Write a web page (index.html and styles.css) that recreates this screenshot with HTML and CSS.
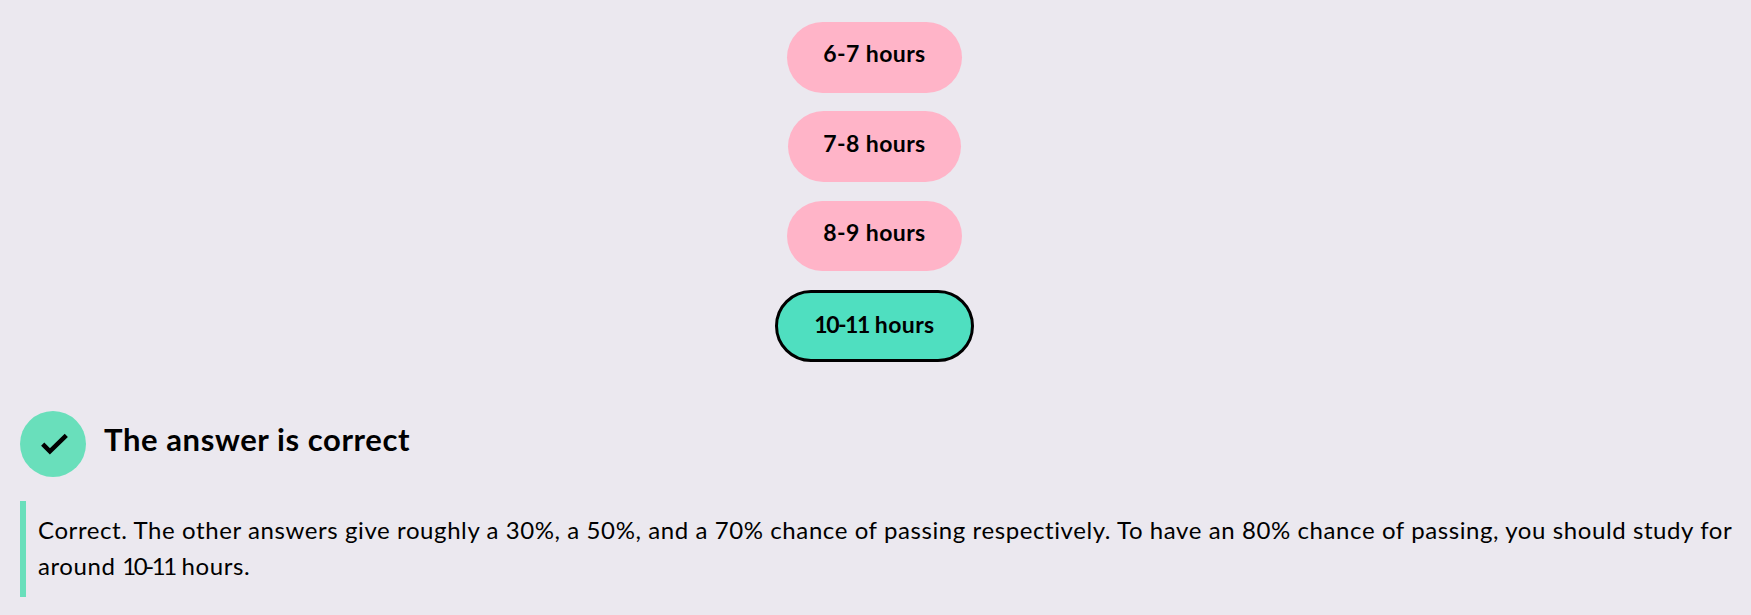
FILE: index.html
```html
<!DOCTYPE html>
<html lang="en">
<head>
<meta charset="utf-8">
<title>Quiz</title>
<link rel="stylesheet" href="styles.css">
</head>
<body>
<main class="quiz">
  <div class="options">
    <button class="option"><span class="option-label">6-7 hours</span></button>
    <button class="option option-narrow"><span class="option-label">7-8 hours</span></button>
    <button class="option option-short"><span class="option-label">8-9 hours</span></button>
    <button class="option option-selected"><span class="option-label"><span class="tight">10-11</span> hours</span></button>
  </div>
  <div class="result">
    <span class="result-icon">
      <svg width="66" height="66" viewBox="0 0 66 66" aria-hidden="true"><path d="M22.7 33.2 29.9 40.4 46.3 24.4" fill="none" stroke="#000" stroke-width="4.5"/></svg>
    </span>
    <h2 class="result-title"><span>The answer is correct</span></h2>
  </div>
  <div class="explanation"><p class="explanation-text"><span>Correct. The other answers give roughly a 30%, a 50%, and a 70% chance of passing respectively. To have an 80% chance of passing, you should study for</span><br><span>around <span class="tight">10-11</span> hours.</span></p></div>
</main>
</body>
</html>
```
FILE: styles.css
```css
* { box-sizing: border-box; }
body {
  margin: 0;
  background: #ebe8ef;
  color: #000;
  font-family: Lato, "Liberation Sans", sans-serif;
}
.quiz { height: 615px; padding: 22px 0 0 20px; overflow: hidden; }
.options {
  display: flex;
  flex-direction: column;
  align-items: center;
  gap: 18px;
  width: 1709px;
}
.option {
  display: flex;
  justify-content: center;
  width: 175px;
  height: 71px;
  padding: 15px 0 0;
  border: 0;
  border-radius: 36px;
  background: #ffb4c8;
  color: #000;
  font: 700 23px/32px Lato, "Liberation Sans", sans-serif;
  letter-spacing: 0.4px;
  white-space: nowrap;
}
.option-narrow { width: 173px; padding-top: 16px; }
.option-short { height: 70px; margin-top: 1px; }
.option-selected {
  width: 199px;
  height: 72px;
  margin-top: 1px;
  border: 3px solid #000;
  background: #4fdfc0;
}
.option .tight { letter-spacing: -1.5px; }
.result { display: flex; gap: 18px; margin-top: 49px; }
.result-icon {
  width: 66px;
  height: 66px;
  border-radius: 50%;
  background: #69dfbb;
}
.result-icon svg { display: block; }
.result-title {
  margin: 8px 0 0;
  font-size: 31px;
  line-height: 40px;
  font-weight: 700;
  letter-spacing: 0.6px;
}
.explanation {
  height: 96px;
  margin-top: 24px;
  padding: 11px 0 0 12px;
  border-left: 6px solid #69dfbb;
}
.explanation-text {
  margin: 0;
  font-size: 24px;
  line-height: 36px;
  letter-spacing: 0.59px;
  white-space: nowrap;
}
.explanation-text .tight { letter-spacing: -2.4px; }
```
